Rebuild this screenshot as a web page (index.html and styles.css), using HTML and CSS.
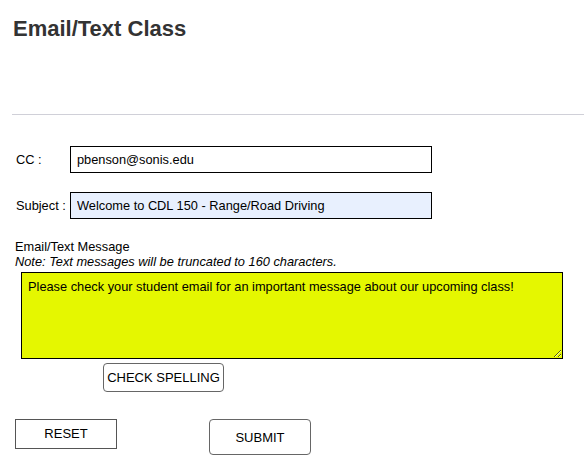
FILE: index.html
```html
<!DOCTYPE html>
<html>
<head>
<meta charset="utf-8">
<link rel="stylesheet" href="styles.css">
</head>
<body>
<div class="page">
  <h1 class="title">Email/Text Class</h1>
  <hr class="divider">
  <form class="form">
    <div class="row row-cc">
      <label class="lbl">CC :</label>
      <input class="field" type="text" value="pbenson@sonis.edu">
    </div>
    <div class="row row-subject">
      <label class="lbl">Subject :</label>
      <input class="field field-filled" type="text" value="Welcome to CDL 150 - Range/Road Driving">
    </div>
    <div class="msg-head">
      <div class="msg-title">Email/Text Message</div>
      <div class="msg-note">Note: Text messages will be truncated to 160 characters.</div>
    </div>
    <textarea class="msg">Please check your student email for an important message about our upcoming class!</textarea>
    <div class="spell-row">
      <button type="button" class="btn btn-spell">CHECK SPELLING</button>
    </div>
    <div class="actions">
      <button type="button" class="btn btn-reset">RESET</button>
      <button type="button" class="btn btn-submit">SUBMIT</button>
    </div>
  </form>
</div>
</body>
</html>
```
FILE: styles.css
```css
html, body {
  margin: 0;
  padding: 0;
  background: #fff;
}
body {
  font-family: "Liberation Sans", Arial, sans-serif;
  font-size: 12.8px;
  color: #000;
}
.page {
  padding: 0;
}
.title {
  margin: 0;
  padding: 16px 0 0 13px;
  font-size: 22px;
  font-weight: bold;
  color: #333;
  line-height: 26px;
  height: 26px;
}
.divider {
  margin: 72px 0 0 12px;
  border: 0;
  border-top: 1px solid #d0d0d8;
  height: 0;
}
.form {
  display: flex;
  flex-direction: column;
}
.row {
  display: flex;
  align-items: center;
  padding-left: 16px;
}
.row-cc {
  margin-top: 31px;
}
.row-subject {
  margin-top: 19px;
}
.lbl {
  width: 54px;
  font-size: 12.8px;
}
.field {
  box-sizing: border-box;
  width: 362px;
  height: 27px;
  border: 1px solid #000;
  padding: 0 6px;
  font-family: "Liberation Sans", Arial, sans-serif;
  font-size: 12.8px;
  color: #000;
  background: #fff;
  margin: 0;
}
.field-filled {
  background: #e8f0fe;
}
.msg-head {
  padding-left: 15px;
  margin-top: 20px;
  line-height: 15px;
}
.msg-note {
  font-style: italic;
}
.msg {
  box-sizing: border-box;
  margin: 3px 0 0 21px;
  width: 542px;
  height: 87px;
  border: 1px solid #000;
  background: #e5f700;
  padding: 6px 6px;
  font-family: "Liberation Sans", Arial, sans-serif;
  font-size: 12.8px;
  color: #000;
  resize: vertical;
  display: block;
}
.spell-row {
  padding-left: 103px;
  margin-top: 4px;
}
.btn {
  box-sizing: border-box;
  font-family: "Liberation Sans", Arial, sans-serif;
  font-size: 13px;
  color: #000;
  background: #fff;
  margin: 0;
  padding: 0;
  cursor: pointer;
}
.btn-spell {
  width: 121px;
  height: 29px;
  border: 1px solid #666;
  border-radius: 4px;
}
.actions {
  display: flex;
  align-items: flex-start;
  padding-left: 15px;
  margin-top: 27px;
  gap: 92px;
}
.btn-reset {
  width: 102px;
  height: 30px;
  border: 1px solid #555;
  border-radius: 0;
  padding-bottom: 2px;
}
.btn-submit {
  width: 102px;
  height: 36px;
  border: 1px solid #666;
  border-radius: 4px;
  padding-top: 1px;
}
```
